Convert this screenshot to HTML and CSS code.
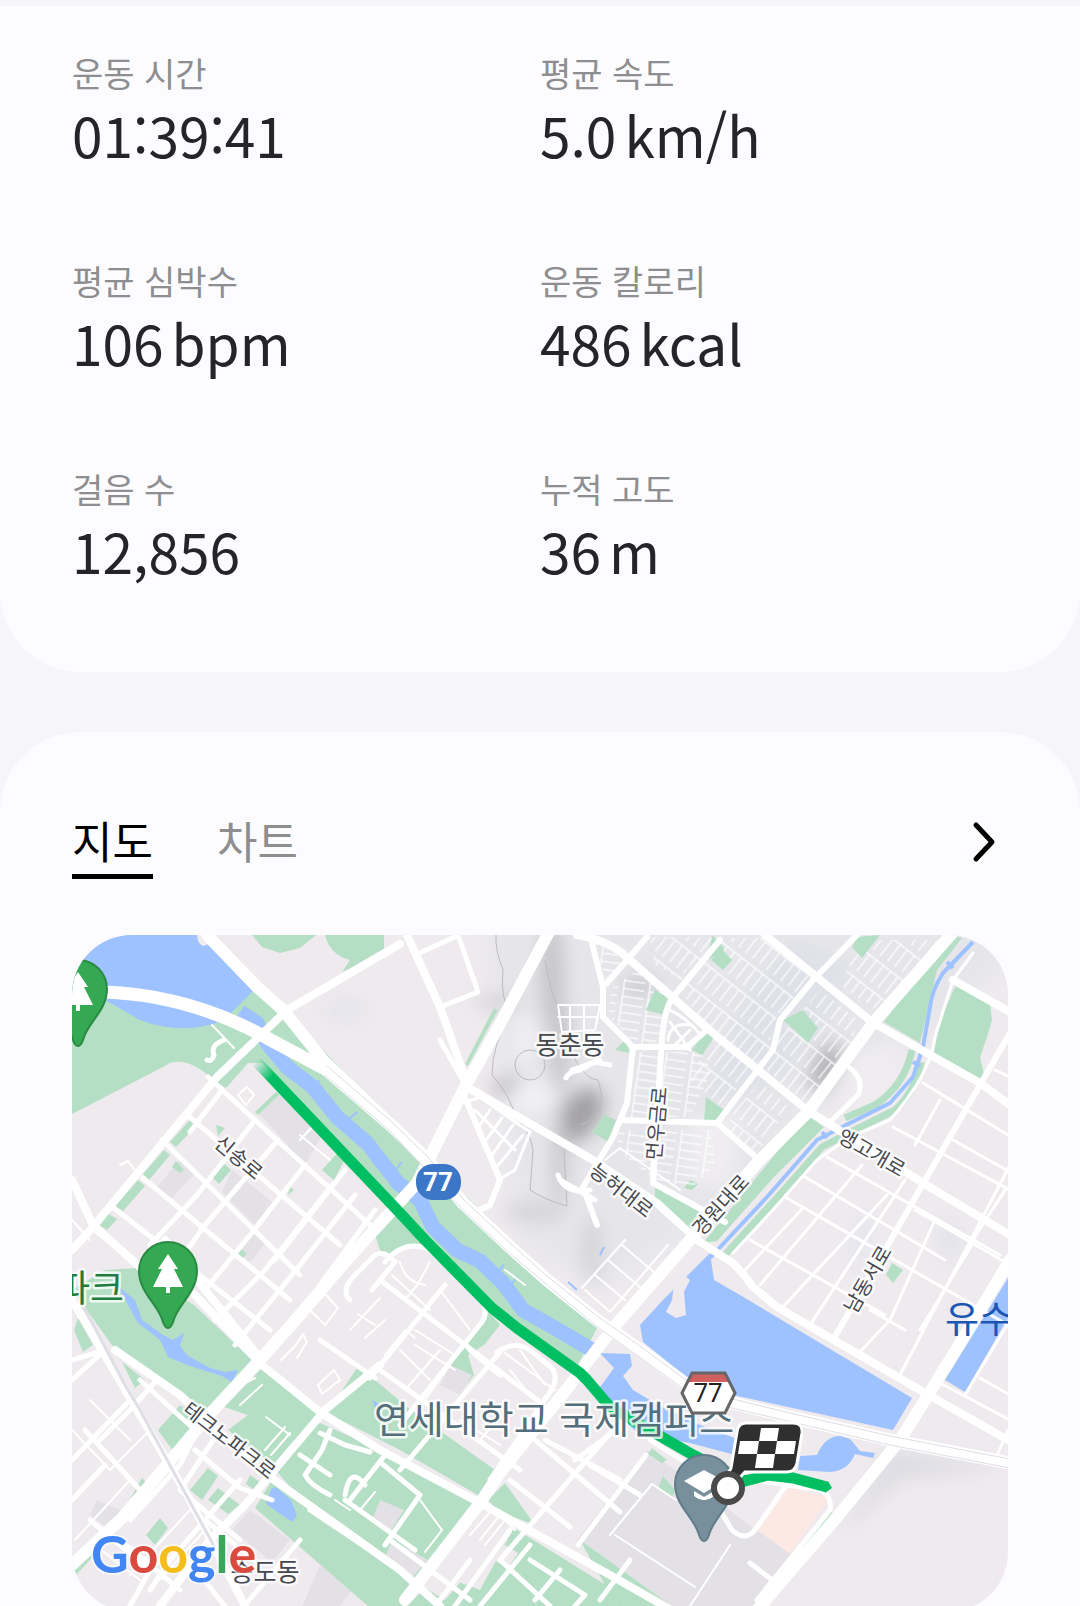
FILE: index.html
```html
<!DOCTYPE html>
<html lang="ko">
<head>
  <meta charset="UTF-8">
  <meta name="viewport" content="width=device-width, initial-scale=1.0">
  <title>걷기 기록</title>
  <link rel="stylesheet" href="styles.css">
</head>
<body>
  <main class="screen">
    <section class="card stats-card">
      <dl class="stats">
        <div class="stat"><dt>운동 시간</dt><dd>01:39:41</dd></div>
        <div class="stat"><dt>평균 속도</dt><dd>5.0<span class="unit">km/h</span></dd></div>
        <div class="stat"><dt>평균 심박수</dt><dd>106<span class="unit">bpm</span></dd></div>
        <div class="stat"><dt>운동 칼로리</dt><dd>486<span class="unit">kcal</span></dd></div>
        <div class="stat"><dt>걸음 수</dt><dd>12,856</dd></div>
        <div class="stat"><dt>누적 고도</dt><dd>36<span class="unit">m</span></dd></div>
      </dl>
    </section>

    <section class="card map-card">
      <div class="tabs">
        <button class="tab active" type="button">지도</button>
        <button class="tab" type="button">차트</button>
        <button class="more" type="button" aria-label="자세히">
          <svg viewBox="0 0 26 44" width="26" height="44"><path d="M2 5 L18 22 L2 39"/></svg>
        </button>
      </div>

      <div class="map">
        <svg viewBox="72 935 936 677" role="img" aria-label="운동 경로 지도">
          <defs>
            <linearGradient id="fade" gradientUnits="userSpaceOnUse" x1="256" y1="1061" x2="272" y2="1077">
              <stop offset="0" stop-color="#00bf63" stop-opacity="0"/>
              <stop offset="1" stop-color="#00bf63"/>
            </linearGradient>
            <filter id="soft" x="-50%" y="-50%" width="200%" height="200%"><feGaussianBlur stdDeviation="9"/></filter>
            <!-- back streets -->
            <pattern id="alley" width="9" height="27" patternUnits="userSpaceOnUse" patternTransform="rotate(38)">
              <path d="M0 1 H9 M4 1 V22" stroke="#fff" stroke-opacity="0.8" stroke-width="1.5" fill="none"/>
            </pattern>
            <pattern id="alleyUp" width="26" height="8" patternUnits="userSpaceOnUse" patternTransform="rotate(8)">
              <path d="M1 0 V8 M1 4 H22" stroke="#fff" stroke-opacity="0.8" stroke-width="1.5" fill="none"/>
            </pattern>
            <path id="pin" d="M0 57 C-3 57 -4 54 -5 51 C-9 34 -29 22 -29 0 A29 29 0 0 1 29 0 C29 22 9 34 5 51 C4 54 3 57 0 57 Z"/>
            <path id="tree" d="M0 -17 L10 -2 H6 L15 16 H2 V22 H-2 V16 H-15 L-6 -2 H-10 Z"/>
          </defs>

          <rect class="land" x="60" y="920" width="960" height="700"/>

          <!-- hill shading -->
          <g filter="url(#soft)">
            <path fill="#e6e6ea" d="M490 925 H1010 V960 L870 1080 L800 1120 L740 1200 L600 1290 L520 1240 L500 1080 Z"/>
            <path fill="#dfe1e8" d="M790 940 L850 960 L830 1020 L780 1080 L700 1110 L740 1000 Z"/>
            <path fill="#f0edf0" d="M690 1120 L740 1110 L730 1190 L690 1180 Z M840 1060 L900 1040 L890 1090 L840 1110 Z"/>
            <ellipse cx="552" cy="975" rx="12" ry="58" fill="#c4c3c7"/>
            <ellipse cx="560" cy="1045" rx="11" ry="48" fill="#c6c5c9"/>
            <ellipse cx="512" cy="1087" rx="20" ry="10" fill="#bab8bd"/>
            <ellipse cx="500" cy="1002" rx="26" ry="6" fill="#d0cfd4"/>
            <ellipse cx="580" cy="1115" rx="20" ry="32" fill="#a3a1a6" transform="rotate(35 580 1115)"/>
            <ellipse cx="560" cy="1160" rx="8" ry="45" fill="#c8c7cb"/>
            <ellipse cx="535" cy="1212" rx="32" ry="9" fill="#d2d1d6"/>
            <ellipse cx="592" cy="1250" rx="10" ry="36" fill="#d4d4d8"/>
            <ellipse cx="640" cy="986" rx="18" ry="10" fill="#c8c7cd"/>
            <ellipse cx="826" cy="1067" rx="12" ry="27" fill="#adacb0" transform="rotate(25 826 1067)"/>
            <ellipse cx="532" cy="1096" rx="22" ry="16" fill="#f2f2f4"/>
            <ellipse cx="525" cy="1040" rx="12" ry="26" fill="#f0f0f2"/>
            <ellipse cx="950" cy="1240" rx="8" ry="22" fill="#dfe1ea"/>
            <ellipse cx="860" cy="1240" rx="6" ry="30" fill="#e2e4ed" transform="rotate(20 860 1240)"/>
            <ellipse cx="345" cy="1010" rx="20" ry="9" fill="#e2e3eb"/>
            <path fill="#dcdce2" d="M890 1452 L1008 1466 L900 1478 L840 1535 Z"/>
          </g>
          <g class="contour">
            <path d="M496 935 Q495 950 503 970 Q500 1000 511 1013 Q492 1045 492 1075 Q510 1095 516 1118 Q530 1130 533 1150 L530 1190 Q545 1200 567 1206 L564 1150"/>
            <path d="M545 960 Q550 990 557 1005 Q575 1080 598 1080 Q610 1115 580 1125"/>
            <circle cx="530" cy="1065" r="15"/>
          </g>

          <!-- blocks -->
          <g class="block">
            <path d="M278 1090 L325 1130 L305 1165 L258 1112 Z M232 1170 L276 1205 L255 1225 L222 1192 Z M180 1160 L196 1172 L170 1200 L156 1188 Z M252 1228 L268 1240 L250 1262 L236 1250 Z"/>
            <path d="M647 1450 L717 1500 L755 1530 L800 1557 L757 1612 H665 L577 1540 Z"/>
            <path d="M250 1510 L290 1540 L272 1562 L232 1530 Z M320 1565 L352 1590 L335 1612 H300 Z"/>
          </g>
          <path fill="#fde9e3" d="M787 1487 L829 1498 L790 1554 L758 1530 Z"/>

          <!-- parks -->
          <g class="park">
            <path d="M72 1000 L200 990 L260 985 L285 1010 L400 1131 L470 1200 L530 1262 L597 1328 L577 1367 L492 1315 L400 1218 L262 1063 L248 1063 L226 1088 L214 1080 Q183 1052 163 1067 L72 1114 Z"/>
            <path d="M252 935 H316 L300 948 L280 953 L262 947 Z M325 935 H384 L384 952 L342 972 L350 960 Q330 955 325 935 Z"/>
            <path d="M190 1120 L197 1125 L176 1147 L170 1142 Z M164 1150 L170 1155 L149 1180 L143 1174 Z M138 1180 L145 1186 L123 1211 L115 1206 Z M107 1213 L117 1219 L107 1230 L99 1225 Z"/>
            <path d="M340 1150 L347 1155 L334 1180 L322 1170 Z M216 1125 L225 1128 L218 1136 Z M225 1164 L231 1170 L219 1184 L211 1176 Z M176 1161 L184 1170 L180 1173 L172 1167 Z M290 1186 L294 1190 L288 1195 Z M276 1092 L279 1095 L258 1115 L255 1112 Z M240 1248 L247 1254 L240 1260 L233 1254 Z"/>
            <path d="M375 1235 L396 1212 L440 1255 L500 1325 L484 1345 L468 1355 L474 1375 L466 1385 L440 1355 L410 1290 L380 1250 Z"/>
            <path d="M105 1270 L140 1268 L195 1306 L252 1360 L207 1414 L180 1400 L115 1349 L72 1290 Z"/>
            <path d="M78 1318 L93 1345 L83 1352 L74 1330 Z M122 1362 L145 1380 L135 1388 Z M180 1405 L200 1420 L174 1452 L158 1430 Z"/>
            <path d="M261 1369 L322 1413 L277 1468 L228 1430 L248 1415 L224 1407 Z"/>
            <path d="M357 1368 L380 1384 L408 1408 L495 1470 L483 1498 L400 1450 L327 1413 Z"/>
            <path d="M318 1422 L380 1450 L478 1502 L408 1590 L380 1570 L320 1520 L277 1472 Z"/>
            <path d="M272 1480 L390 1560 L412 1580 L408 1612 L375 1612 L255 1508 Z"/>
            <path d="M505 1483 L535 1525 L500 1512 L488 1500 Z M514 1528 L630 1600 L600 1612 H400 L440 1575 L480 1590 Z M580 1540 L680 1612 H620 Z"/>
            <path d="M208 1468 L218 1476 L202 1500 L190 1490 Z M218 1488 L240 1505 L228 1514 L208 1500 Z M142 1478 L148 1484 L124 1510 Z M160 1518 L168 1528 L155 1545 L146 1535 Z M72 1568 L120 1515 L122 1525 L76 1575 Z M250 1475 L260 1482 L254 1490 L246 1484 Z"/>
            <path d="M498 1010 L468 1066 L465 1064 L494 1008 Z M655 990 L668 998 L662 1014 L646 1010 Z M625 1040 L630 1053 L615 1050 Z M705 1032 L715 1036 L702 1055 L692 1050 Z M712 935 L725 949 L708 960 Z M604 1115 L616 1120 L608 1142 L592 1132 Z M655 1183 L700 1210 L690 1240 L655 1205 Z M690 1180 L698 1184 L692 1190 L684 1188 Z"/>
            <path d="M953 935 L962 938 L937 970 L920 1043 L884 1022 L922 970 Z M957 983 L990 1003 L992 1020 L987 1037 L980 1057 L985 1080 L977 1083 L933 1058 L940 1020 Z"/>
            <path d="M807 1115 L824 1127 L773 1178 L717 1241 L703 1243 Z M892 1263 L903 1270 L893 1283 L886 1275 Z M663 1476 L675 1490 L672 1498 L658 1488 Z"/>
            <path d="M830 1511 L836 1515 L805 1553 L801 1550 Z M797 1556 L802 1560 L768 1604 L763 1600 Z M652 1448 L667 1460 L662 1463 L648 1454 Z"/>
            <path d="M1008 1262 L945 1380 L940 1378 L1005 1262 Z"/>
          </g>
          <path class="park-line" d="M912 1050 Q905 1085 875 1105 L845 1118 M921 1062 Q915 1092 895 1110 L855 1130 L822 1147 L775 1200 L722 1258"/>
          <path class="land" d="M385 1262 Q405 1238 430 1250 L478 1295 Q490 1310 482 1322 L440 1375 L400 1330 Z"/>
          <path class="block" d="M380 1500 L404 1510 L390 1532 L372 1520 Z M392 1540 L428 1560 L410 1580 L384 1560 Z M97 1500 L120 1510 L110 1530 L90 1515 Z M450 1365 L472 1375 L460 1395 L440 1385 Z"/>
          <path class="land" d="M488 1518 L508 1528 L445 1600 L425 1588 Z M445 1578 L455 1583 L444 1596 L432 1590 Z M505 1545 L518 1553 L508 1568 L494 1560 Z"/>

          <!-- water -->
          <g class="water">
            <path d="M72 935 H209 L257 987 L226 1018 L216 1023 Q180 1035 140 1020 L105 1000 L72 990 Z"/>
            <path d="M710 1253 L714 1280 L740 1295 L912 1398 L893 1430 L733 1395 L690 1380 L643 1342 L640 1325 L663 1300 Z"/>
            <path d="M600 1353 L630 1354 L632 1366 L623 1376 L633 1390 L660 1406 L700 1425 L740 1440 L735 1455 L690 1443 L640 1435 L610 1408 L598 1390 L614 1368 Z"/>
            <path d="M800 1456 L817 1455 Q825 1436 840 1436 L850 1439 L860 1451 L875 1453 L873 1458 L855 1454 Q848 1471 830 1472 L798 1470 Z"/>
            <path d="M1008 1278 L945 1380 L965 1392 L1008 1318 Z"/>
            <path d="M271 1489 L276 1487 L291 1500 L297 1515 L292 1522 L266 1504 Z M372 1400 L380 1404 L376 1410 Z"/>
            <path d="M118 1286 L135 1300 L142 1320 L163 1335 L173 1340 L184 1333 L180 1346 L188 1356 L210 1368 L225 1372 L238 1370 L232 1382 L222 1376 L190 1366 L168 1357 L160 1340 L138 1323 L128 1305 Z"/>
          </g>
          <path class="river" d="M240 1012 L257 1023 L267 1043 L287 1067 L313 1087 L337 1117 L367 1143 L398 1183 L420 1200 L433 1227 L457 1250 L480 1261 L503 1283 L523 1310 L553 1327 L592 1350"/>
          <path class="brook" d="M315 1087 L320 1080 M348 1120 L357 1112 M394 1172 L402 1162 M497 1275 L504 1264 M510 1286 L517 1277 M600 1255 L604 1247 M568 1282 L577 1290"/>
          <path class="canal" d="M973 942 L943 973 Q932 990 930 1007 L923 1047 L913 1077 L890 1103 L850 1123 L817 1140 L767 1197 L710 1258 M913 1062 L920 1066 M822 1132 L827 1138 M947 962 L953 968"/>
          <path class="land" d="M690 1280 L684 1292 L686 1315 L676 1318 L666 1312 L672 1300 L674 1285 L684 1275 Z M202 935 H212 Q210 946 203 946 Q197 943 197 935 Z"/>

          <!-- dense quarters -->
          <path fill="url(#alley)" d="M700 938 H765 L810 978 L775 1020 L768 1050 L720 1110 L690 1080 L712 1035 L680 990 Z M820 990 L858 1020 L848 1055 L805 1105 L755 1060 L790 1025 Z M735 1110 L760 1082 L790 1108 L755 1155 L725 1130 Z M650 937 H700 L682 980 L655 965 Z M860 940 H945 L880 1012 L840 985 Z"/>
          <path fill="url(#alleyUp)" d="M612 988 L640 968 L675 1000 L655 1045 H636 L608 1015 Z M632 1052 H700 L712 1070 L690 1117 H625 Z M618 1130 H712 L715 1165 L690 1190 L652 1178 L618 1150 Z M592 940 L625 960 L608 985 Z"/>
          <path class="park" d="M721 948 L732 960 L723 970 L711 960 Z M857 937 L880 935 L862 958 L852 947 Z M783 1020 L803 1010 L818 1028 L808 1043 L797 1032 Z M706 1097 L724 1110 L717 1121 H704 Z M655 990 L668 998 L662 1014 L646 1010 Z M705 1032 L715 1036 L702 1055 L692 1050 Z"/>
          <path class="r2" d="M558 1005 H600 L595 1030 L562 1032 Z M558 1017 H598 M570 1005 V1035 M584 1005 V1035 M605 1160 L620 1148 L680 1190"/>
          <path class="r3" d="M466 1102 L480 1097 Q505 1115 530 1132 L515 1170 L498 1180 M475 1110 L515 1150 M480 1125 L490 1110 M486 1140 L502 1118 M492 1155 L513 1125 M496 1168 L523 1135 M670 1010 Q690 1020 700 1035 M668 1040 Q670 1022 690 1025 M670 1022 L690 1050 M672 1048 L690 1030"/>

          <!-- local streets, west -->
          <g class="r2">
            <path d="M238 1095 L247 1087 L254 1095 L246 1105 Z M300 1135 L330 1160 M120 1165 L128 1161 L136 1172 M72 1220 L90 1240 M300 1140 L312 1127 M212 1025 L234 1048"/>
            <path d="M281 1360 L296 1345 L303 1334 L307 1342 L297 1358 M318 1385 L334 1370 L340 1380 L322 1394 Z M310 1310 L325 1294 L338 1308 L325 1325 Z M350 1330 L380 1298 M358 1314 L375 1325 M365 1338 L385 1320 M385 1355 L405 1330 L415 1338"/>
            <path d="M266 1417 L290 1435 M265 1450 L285 1427 M271 1455 L290 1433 M277 1462 L296 1440 M415 1345 L455 1370 M405 1390 L440 1350 M425 1400 L450 1365 M245 1383 L255 1378 M240 1405 L262 1385 M335 1500 L350 1510 M360 1510 L375 1492"/>
            <path d="M480 1540 L500 1515 L515 1530 M470 1535 L490 1512 M485 1545 L505 1520 M420 1500 L442 1530 L425 1552 M505 1270 L525 1285 M610 1535 L652 1484 L676 1500 M615 1535 L695 1587 M690 1606 L730 1545"/>
            <path d="M400 1262 Q405 1282 425 1285 M392 1275 L430 1310 M430 1262 L418 1284 L405 1300 M440 1290 Q455 1310 470 1330 M505 1353 L555 1390 M520 1350 L545 1385 M510 1370 L530 1395 M400 1350 L430 1380 M415 1330 L455 1355 M460 1420 L500 1445 M480 1440 L497 1420"/>
            <path d="M582 1288 L625 1240 M585 1290 L610 1312 L668 1245 M595 1275 L625 1300 M608 1260 L640 1287 M622 1245 L655 1273"/>
            <path d="M72 1430 L110 1470 L150 1430 M90 1400 L130 1440 M75 1540 L130 1480 M130 1575 L190 1510 M150 1590 L205 1530 M95 1545 L140 1580"/>
          </g>

          <g class="r4">
            <path d="M224 1040 Q210 1045 214 1055 Q212 1062 207 1060"/>
            <path d="M208 1077 L370 1225 M185 1113 L340 1245 M162 1140 L300 1275 M143 1178 L290 1300 M110 1205 L270 1330 M95 1230 L150 1275"/>
            <path d="M255 1120 L197 1195 L150 1245 M222 1090 L190 1132 M278 1140 L205 1225 L180 1260 M305 1165 L250 1235 L205 1290 M332 1185 L265 1270 L215 1320 M345 1170 L275 1260 M355 1195 L300 1265 L235 1345 M375 1210 L320 1285"/>
            <path d="M385 1262 Q405 1238 430 1250 L478 1295 Q490 1310 482 1322 L400 1425 M380 1280 L540 1402 M395 1262 L372 1290 M445 1285 L370 1378 M380 1370 L520 1470"/>
            <path d="M497 1352 Q515 1340 530 1350 L552 1368 Q560 1380 548 1395 L490 1480 M500 1352 L400 1470 M470 1350 L500 1375"/>
            <path d="M350 1300 Q340 1290 355 1275 L375 1255 Q385 1250 395 1262 M320 1340 L375 1378"/>
            <path d="M330 1430 L322 1450 L305 1475 Q310 1485 330 1495 M320 1433 L345 1445 L370 1452 M345 1495 Q350 1465 365 1485 M300 1455 L330 1475 M385 1455 L350 1500 M380 1462 L420 1495 L385 1545"/>
            <path d="M345 1500 L415 1550 M310 1510 L400 1570 M205 1520 L260 1565 M240 1480 L170 1560 L150 1590 M300 1540 L245 1605"/>
            <path d="M72 1360 L105 1350 L130 1400 L72 1460 M105 1350 L72 1380 M140 1380 L195 1430 M155 1382 L130 1410 L100 1440 M85 1430 L140 1490 M72 1500 L105 1465 M205 1415 L180 1465 L130 1520"/>
            <path d="M195 1450 L240 1488 L272 1500 M220 1430 L180 1490 L240 1540 M120 1540 L180 1590 M90 1520 L150 1570 L130 1606 M180 1550 L225 1606"/>
            <path d="M535 1440 L620 1512 M510 1480 L570 1527 M610 1433 L500 1560 M646 1455 L578 1545 M590 1465 L640 1495 M575 1460 L630 1420 M545 1440 L620 1480"/>
            <path d="M390 1540 L470 1600 M510 1530 L455 1606 M530 1545 L480 1606 M500 1560 L550 1606 M530 1560 L585 1595 L575 1606 M560 1570 L535 1600 M630 1560 L600 1600 M470 1560 L440 1600"/>
            <path d="M650 1440 L690 1465 M717 1505 L732 1530 Q745 1542 755 1530 L785 1487 M755 1480 L820 1490 Q832 1495 830 1510 M830 1510 L757 1600 M750 1563 L772 1580"/>
            <path d="M440 1007 L478 992 L458 935 M415 955 L455 937 M466 1086 L440 1040 M600 1060 L572 1070 M595 1200 L560 1180 M850 1068 Q865 1080 858 1095 L830 1122"/>
            <path d="M566 1078 Q568 1072 580 1070 L595 1062 L610 1065 M558 1175 Q565 1195 590 1190"/>
          </g>

          <!-- industrial district, east -->
          <g class="r3">
            <path d="M973 953 L953 980 L935 1037 Q930 1075 890 1120 L850 1137 L817 1160 L773 1210 L733 1253"/>
            <path d="M893 1127 L1010 1190 M923 1083 L1008 1135 M827 1157 L1000 1255 M805 1177 L945 1260 M785 1197 L1008 1325 M750 1240 L885 1315 M953 1140 L1010 1172 M915 1210 L1005 1262 M995 1070 L1010 1077 M870 1310 L905 1330"/>
            <path d="M940 1100 L915 1145 M862 1165 L760 1285 M887 1195 L780 1310 M935 1220 L890 1320 L857 1355 M1010 1165 L900 1375 M905 1180 L810 1325 M975 1240 L920 1330 M1005 1190 L960 1260 M802 1209 L745 1270"/>
            <path d="M980 1378 L1010 1395 M965 1395 L1010 1320 M940 1383 L1010 1420 M1008 1430 L995 1460"/>
          </g>

          <!-- arterials -->
          <g class="r6">
            <path d="M857 935 L813 980 L780 1020 L773 1050 L717 1123 L620 1120 M720 940 L673 997 Q663 1010 661 1053 L653 1183 L725 1222"/>
            <path d="M590 935 L603 987 V1017 L633 1047 L627 1103 L613 1137 L583 1187 L597 1225 M647 937 L607 983 M633 1047 H687 L707 1030 L680 1005 M717 1123 L757 1158"/>
            <path d="M1010 1033 L980 1085 L833 1340 M466 1100 L500 1180 L490 1205 L475 1212"/>
          </g>
          <g class="r8">
            <path d="M400 944 L287 1010 L217 1077 L93 1227 L72 1250 M407 935 L440 1007 L467 1083"/>
            <path d="M72 1180 L93 1225 L160 1285 M165 1240 L260 1358 M190 1290 L262 1365 L320 1412 L380 1450 L480 1503 L610 1575 L680 1615 M115 1350 L180 1395 L260 1470 L400 1570 L440 1606"/>
            <path d="M467 1087 L593 1160 L657 1203 L697 1240 L733 1263 Q745 1275 753 1287 L777 1307 L920 1390 L1008 1440"/>
            <path d="M577 935 Q610 940 630 960 L713 1033 L807 1110 L923 1183 L1010 1235 M765 935 L872 1022 L980 1083 L1010 1105 M953 980 L1010 1012"/>
            <path d="M380 1365 L325 1410 L245 1505 L210 1540 L160 1606 M72 1300 L90 1330 L190 1500 L245 1606"/>
          </g>
          <g class="r12">
            <path d="M550 930 L493 1037 L467 1083 L417 1183 L345 1262 L293 1323 L257 1363 L207 1417 L123 1517 L72 1565"/>
            <path d="M955 930 L873 1023 L807 1113 L757 1163 L690 1240 L613 1328 L570 1385 L500 1473 L480 1503 L405 1600"/>
            <path d="M1010 1260 L970 1327 L927 1397 L900 1440 L837 1517 L757 1610"/>
            <path d="M207 935 L257 987 L283 1010 L323 1060 L393 1127"/>
          </g>
          <path class="highway" d="M104 992 Q190 995 267 1038 L327 1070 L393 1127 L427 1160 L463 1203 L510 1247 L547 1280 L597 1320 L640 1350 L690 1387 L733 1403 L790 1417 L890 1440 L1010 1463"/>
          <path class="rail" d="M327 1066 L393 1123 L427 1156 L463 1199 L510 1243 L547 1276 L597 1316 L640 1346 L690 1383 L733 1399 L790 1413 L890 1436 L1010 1459 M325 1075 L391 1132 L461 1208 L508 1252 L595 1325 L688 1392 L732 1408 L890 1445 L1010 1468"/>
          <path class="railway" d="M80 1300 L125 1385 L140 1410 L215 1548"/>

          <path class="route" stroke="url(#fade)" d="M256 1061 L400 1213 L425 1240 L492 1308 L517 1328 L580 1373 L587 1380 L610 1407 L667 1440 L693 1455 L745 1481 L768 1475 L793 1478 L827 1487"/>
          <path fill="#00bf63" d="M828 1481 L832 1488 L825 1493 Z"/>

          <!-- place names -->
          <g class="label">
            <text x="570" y="1054" class="town">동춘동</text>
            <text transform="translate(234 1163) rotate(40)">신송로</text>
            <text transform="translate(664 1124) rotate(-85)">먼우금로</text>
            <text transform="translate(617 1196) rotate(38)">능허대로</text>
            <text transform="translate(726 1210) rotate(-48)">경원대로</text>
            <text transform="translate(868 1159) rotate(30)">앵고개로</text>
            <text transform="translate(874 1283) rotate(-60)">남동서로</text>
            <text transform="translate(225 1446) rotate(38)">테크노파크로</text>
            <text x="265" y="1581" class="town">송도동</text>
            <text x="90" y="1302" class="place park-name">파크</text>
            <text x="554" y="1433" class="place campus">연세대학교 국제캠퍼스</text>
            <text x="979" y="1333" class="place water-name">유수</text>
          </g>

          <!-- road shields -->
          <rect x="416" y="1164" width="45" height="36" rx="17" fill="#3b76c7"/>
          <text x="438" y="1191" class="shield shield-light">77</text>
          <path d="M692 1373 H725 L735 1393 L725 1413 H692 L682 1393 Z" fill="#fff"/>
          <path d="M692 1374 H725 L729 1382 H688 Z" fill="#d15f5f"/>
          <path d="M692 1373 H725 L735 1393 L725 1413 H692 L682 1393 Z" fill="none" stroke="#666" stroke-width="3"/>
          <text x="708" y="1402" class="shield">77</text>

          <!-- pins -->
          <g class="pin pin-park" transform="translate(78 989)"><use href="#pin"/><use href="#tree" class="glyph"/></g>
          <g class="pin pin-park" transform="translate(168 1271)"><use href="#pin"/><use href="#tree" class="glyph"/></g>
          <g class="pin pin-school" transform="translate(704 1484)">
            <use href="#pin"/>
            <path class="glyph" d="M0 -14 L20 -3 L0 9 L-20 -3 Z M-10 7 L0 13 L10 7 V12 Q0 20 -10 12 Z"/>
          </g>

          <!-- finish flag -->
          <path d="M746 1423 H793 Q803 1423 802 1433 L797 1463 Q795 1472 787 1472 H745 L732 1486 L726 1478 L731 1468 L737 1432 Q738 1423 746 1423 Z" fill="#2f2f2f" stroke="#fff" stroke-width="3"/>
          <path d="M761 1428 H779 L777 1441 H759 Z M740 1441 H759 L757 1454 H738 Z M777 1441 H796 L794 1454 H775 Z M757 1454 H775 L773 1468 H755 Z" fill="#fff"/>
          <circle cx="728" cy="1488" r="14" fill="#fff" stroke="#4a4a4a" stroke-width="6"/>

          <text x="91" y="1573" class="logo"><tspan fill="#4285f4">G</tspan><tspan fill="#db4a3f">o</tspan><tspan fill="#f4bd1c">o</tspan><tspan fill="#4285f4">g</tspan><tspan fill="#3ba55b">l</tspan><tspan fill="#db4a3f">e</tspan></text>
        </svg>
      </div>
    </section>
  </main>
</body>
</html>
```

FILE: styles.css
```css
* { box-sizing: border-box; margin: 0; padding: 0; }
body {
  background: #f6f6f8;
  color: #252528;
  font-family: "Noto Sans CJK KR", "Noto Sans", sans-serif;
}
.screen {
  height: 100vh;
  overflow: hidden;
  display: flex;
  flex-direction: column;
  gap: 60px;
  padding-top: 6px;
}
.card {
  flex: none;
  background: #fcfcff;
  padding: 0 72px;
}
.stats-card {
  border-radius: 0 0 80px 80px;
  padding-top: 46px;
  padding-bottom: 90px;
}
.map-card {
  border-radius: 80px 80px 0 0;
  padding-top: 80px;
  padding-bottom: 72px;
}

/* workout numbers */
.stats {
  display: grid;
  grid-template-columns: 1fr 1fr;
  row-gap: 94px;
}
.stat dt {
  font-size: 34px;
  line-height: 42px;
  color: #8e8e91;
}
.stat dd {
  margin-top: 8px;
  font-size: 55px;
  line-height: 64px;
}
.unit { margin-left: 8px; }

/* map / chart tabs */
.tabs {
  display: flex;
  align-items: flex-start;
  gap: 64px;
  margin-bottom: 56px;
}
.tab {
  border: none;
  border-bottom: 5px solid transparent;
  background: none;
  padding-bottom: 6px;
  font-family: inherit;
  font-size: 44px;
  line-height: 56px;
  color: #8e8e8e;
  cursor: pointer;
}
.tab.active {
  color: #000;
  border-bottom-color: #000;
}
.more {
  margin-left: auto;
  padding: 8px;
  border: none;
  background: none;
  cursor: pointer;
}
.more svg {
  display: block;
  overflow: visible;
  fill: none;
  stroke: #000;
  stroke-width: 5;
  stroke-linecap: round;
  stroke-linejoin: round;
}

/* map */
.map {
  border-radius: 60px;
  overflow: hidden;
}
.map svg { display: block; width: 100%; height: auto; }
.land { fill: #eeeaee; }
.block { fill: #e3e1e5; }
.park { fill: #b4dfc4; }
.park-line { fill: none; stroke: #b4dfc4; stroke-width: 7; }
.water { fill: #9dc2ff; }
.river, .brook, .canal { fill: none; stroke: #9dc2ff; stroke-linejoin: round; }
.river { stroke-width: 15; }
.brook { stroke-width: 2; }
.canal { stroke-width: 4; }
.contour { fill: none; stroke: #bcbbbf; stroke-width: 1; }
.r2, .r3, .r4, .r6, .r8, .r12, .highway {
  fill: none;
  stroke: #fff;
  stroke-linecap: round;
  stroke-linejoin: round;
}
.r2 { stroke-width: 2; }
.r3 { stroke-width: 3; }
.r4 { stroke-width: 5; }
.r6 { stroke-width: 6; }
.r8 { stroke-width: 8; }
.r12 { stroke-width: 12; }
.highway { stroke-width: 13; }
.rail { fill: none; stroke: #dedde5; stroke-width: 1; }
.railway { fill: none; stroke: #dfdee6; stroke-width: 3; }
.route { fill: none; stroke-width: 11; stroke-linejoin: round; }

.label text {
  font-size: 20px;
  text-anchor: middle;
  fill: #45484d;
  stroke: rgba(255, 255, 255, 0.8);
  stroke-width: 5;
  stroke-linejoin: round;
  paint-order: stroke;
}
.label .town { font-size: 25px; }
.label .place { font-size: 37px; }
.label .park-name { fill: #1f7d3d; }
.label .campus { font-size: 38px; fill: #546e7a; }
.label .water-name { fill: #1b56b3; stroke: none; }

.shield {
  font-family: Roboto, sans-serif;
  font-size: 26px;
  text-anchor: middle;
  fill: #222;
}
.shield-light { fill: #fff; font-weight: 700; }
.pin-park { fill: #34a853; stroke: #2a8a44; stroke-width: 2; }
.pin-school { fill: #78909c; stroke: #607d8b; stroke-width: 2; }
.glyph { fill: #fff; stroke: none; }
.logo {
  font-family: Lato, sans-serif;
  font-size: 52px;
  font-weight: 700;
  stroke: rgba(255, 255, 255, 0.6);
  stroke-width: 4;
  paint-order: stroke;
}
```
